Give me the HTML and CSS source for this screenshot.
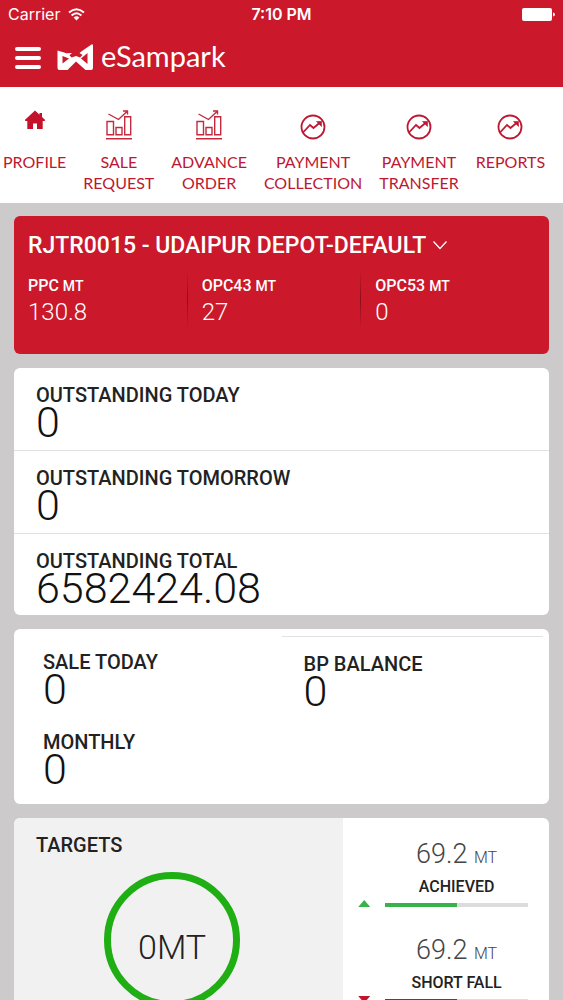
FILE: index.html
```html
<!DOCTYPE html>
<html lang="en">
<head>
  <meta charset="UTF-8" />
  <meta name="viewport" content="width=device-width, initial-scale=1.0"/>
  <title>eSampark</title>
  <link rel="stylesheet" href="styles.css">
</head>
<body>
  <header class="header">
    <div class="status-bar">
      <div class="carrier">
        <span>Carrier</span>
        <svg width="17" height="13" viewBox="0 0 17 13" fill="none" stroke="#fff" stroke-width="2">
          <path d="M1 4.600 Q8.500 -2 16 4.600"/>
          <path d="M3.600 7.400 Q8.500 3 13.400 7.400"/>
          <path d="M8.500 12.500 L5.600 9.500 Q8.500 7.200 11.400 9.500 Z" fill="#fff" stroke="none"/>
        </svg>
      </div>
      <span class="time">7:10 PM</span>
      <svg class="battery" width="33" height="13" viewBox="0 0 33 13" fill="#fff">
        <rect x="0" y="0" width="30" height="13" rx="2"/>
        <path d="M31 4.500 Q33 5 33 6.500 Q33 8 31 8.500 Z"/>
      </svg>
    </div>
    <div class="title-bar">
      <button class="menu-btn" type="button" aria-label="Menu">
        <span></span>
        <span></span>
        <span></span>
      </button>
      <svg class="logo" width="36" height="27" viewBox="0 0 36 27">
        <path fill="#fff" fill-rule="evenodd" d="M0.500 6.500 L9.500 9.300 L15 9 L12.500 11.200 L14.500 13.500 L19 12 L23 13.500 L25.500 11 L22.500 9 L25 7 L34.500 0.500 H36 V24 Q36 26 34 26 H28.500 L19 17.500 L10.500 26 H2.500 Q0.500 26 0.500 24 Z M5.500 12 V19.500 L12 14.500 Z M30.500 9 V20 L24 14.500 Z"/>
      </svg>
      <h1>eSampark</h1>
    </div>
  </header>

  <nav class="nav">
    <a href="#">
      <svg width="26" height="30" viewBox="0 0 26 30" fill="#c4122a">
        <path d="M13 0.500 L17.500 4.700 V3 H20 V7 L23.200 10 L22.500 11 H20.700 V19 H15 V13.500 H11 V19 H5.300 V11 H3.500 L2.800 10 Z"/>
      </svg>
      <span>PROFILE</span>
    </a>
    <a href="#">
      <svg width="26" height="30" viewBox="0 0 26 30" fill="none" stroke="#c4293d" stroke-width="1.400">
        <path d="M0 28.700 H26 M1 11.500 H7.500 V24.700 H1 Z M10 17.500 H16 V24.700 H10 Z M18.700 6.700 H24.700 V24.700 H18.700 Z M2.500 4 L12.500 9.500 L21 1.500 M17 1 H21.500 V4.500"/>
      </svg>
      <span>SALE<br>REQUEST</span>
    </a>
    <a href="#">
      <svg width="26" height="30" viewBox="0 0 26 30" fill="none" stroke="#c4293d" stroke-width="1.400">
        <path d="M0 28.700 H26 M1 11.500 H7.500 V24.700 H1 Z M10 17.500 H16 V24.700 H10 Z M18.700 6.700 H24.700 V24.700 H18.700 Z M2.500 4 L12.500 9.500 L21 1.500 M17 1 H21.500 V4.500"/>
      </svg>
      <span>ADVANCE<br>ORDER</span>
    </a>
    <a href="#">
      <svg width="26" height="30" viewBox="0 0 26 30" fill="none" stroke="#bd1831" stroke-width="1.800">
        <circle cx="13" cy="17" r="11.500"/>
        <path d="M3 22.500 L10 15 L13.500 18 L20 12.500"/>
        <path d="M16.500 11.500 H21.500 V16.500 Z" fill="#bd1831" stroke-width="0.600"/>
      </svg>
      <span>PAYMENT<br>COLLECTION</span>
    </a>
    <a href="#">
      <svg width="26" height="30" viewBox="0 0 26 30" fill="none" stroke="#bd1831" stroke-width="1.800">
        <circle cx="13" cy="17" r="11.500"/>
        <path d="M3 22.500 L10 15 L13.500 18 L20 12.500"/>
        <path d="M16.500 11.500 H21.500 V16.500 Z" fill="#bd1831" stroke-width="0.600"/>
      </svg>
      <span>PAYMENT<br>TRANSFER</span>
    </a>
    <a href="#">
      <svg width="26" height="30" viewBox="0 0 26 30" fill="none" stroke="#bd1831" stroke-width="1.800">
        <circle cx="13" cy="17" r="11.500"/>
        <path d="M3 22.500 L10 15 L13.500 18 L20 12.500"/>
        <path d="M16.500 11.500 H21.500 V16.500 Z" fill="#bd1831" stroke-width="0.600"/>
      </svg>
      <span>REPORTS</span>
    </a>
  </nav>

  <main class="content">
    <section class="card depot">
      <div class="depot-picker">
        <select aria-label="Depot">
          <option>RJTR0015 - UDAIPUR DEPOT-DEFAULT</option>
        </select>
        <svg width="14" height="9" viewBox="0 0 14 9" fill="none" stroke="#fff" stroke-width="1.300">
          <path d="M0.500 0.500 L7 7.500 L13.500 0.500"/>
        </svg>
      </div>
      <div class="stock">
        <div class="stock-item">
          <h3>PPC <small>MT</small></h3>
          <p>130.8</p>
        </div>
        <div class="stock-item">
          <h3>OPC43 <small>MT</small></h3>
          <p>27</p>
        </div>
        <div class="stock-item">
          <h3>OPC53 <small>MT</small></h3>
          <p>0</p>
        </div>
      </div>
    </section>

    <section class="card outstanding">
      <div class="row">
        <h2>OUTSTANDING TODAY</h2>
        <p class="amount">0</p>
      </div>
      <div class="row">
        <h2>OUTSTANDING TOMORROW</h2>
        <p class="amount">0</p>
      </div>
      <div class="row">
        <h2>OUTSTANDING TOTAL</h2>
        <p class="amount">6582424.08</p>
      </div>
    </section>

    <section class="card sales">
      <div class="sales-left">
        <div>
          <h2>SALE TODAY</h2>
          <p class="amount">0</p>
        </div>
        <div>
          <h2>MONTHLY</h2>
          <p class="amount">0</p>
        </div>
      </div>
      <div class="sales-right">
        <h2>BP BALANCE</h2>
        <p class="amount">0</p>
      </div>
    </section>

    <section class="card targets">
      <div class="target-total">
        <h2>TARGETS</h2>
        <div class="ring">0MT</div>
      </div>
      <div class="target-stats">
        <div class="stat">
          <p class="stat-value">69.2 <small>MT</small></p>
          <p class="stat-label">ACHIEVED</p>
          <span class="arrow up"></span>
          <div class="bar"><div class="fill green" style="width: 50%"></div></div>
        </div>
        <div class="stat">
          <p class="stat-value">69.2 <small>MT</small></p>
          <p class="stat-label">SHORT FALL</p>
          <span class="arrow down"></span>
          <div class="bar"><div class="fill red" style="width: 50%"></div></div>
        </div>
      </div>
    </section>
  </main>
</body>
</html>
```
FILE: styles.css
```css
* {
  box-sizing: border-box;
}
body {
  margin: 0;
  height: 100vh;
  display: flex;
  flex-direction: column;
  overflow: hidden;
  font-family: Roboto, 'Liberation Sans', sans-serif;
  color: #222;
  background: #cccacb;
}
h1, h2, h3, p {
  margin: 0;
}
svg {
  display: block;
}
small {
  line-height: 1;
}

/* Header */
.header {
  flex: none;
  background: #cb182a;
  color: #fff;
}
.status-bar {
  display: grid;
  grid-template-columns: 1fr auto 1fr;
  align-items: center;
  height: 28px;
  padding: 0 8px;
  font-family: Inter, sans-serif;
  font-size: 16px;
}
.carrier {
  display: flex;
  align-items: center;
  gap: 8px;
}
.time {
  font-weight: 600;
}
.battery {
  justify-self: end;
}
.title-bar {
  display: flex;
  align-items: center;
  height: 59px;
  padding: 0 15px;
}
.menu-btn {
  display: flex;
  flex-direction: column;
  gap: 5px;
  width: 26px;
  padding: 0;
  border: none;
  background: none;
  cursor: pointer;
}
.menu-btn span {
  height: 4px;
  border-radius: 2px;
  background: #fff;
}
.logo {
  margin: 0 8px 0 16px;
}
.title-bar h1 {
  padding-bottom: 4px;
  font-family: Lato, sans-serif;
  font-size: 29px;
  font-weight: 400;
  line-height: 32px;
}

/* Navigation */
.nav {
  flex: none;
  display: flex;
  gap: 17px;
  padding: 23px 3px 10px;
  background: #fff;
}
.nav a {
  display: flex;
  flex-direction: column;
  align-items: center;
  gap: 11px;
  color: #bd1831;
  font-family: Lato, sans-serif;
  font-size: 16px;
  line-height: 21px;
  text-align: center;
  text-decoration: none;
}

/* Cards */
.content {
  flex: 1;
  min-height: 0;
  padding: 13px 14px;
  overflow-y: auto;
  scrollbar-width: none;
}
.card {
  margin-bottom: 14px;
  border-radius: 6px;
  background: #fff;
  overflow: hidden;
}
h2 {
  font-size: 20px;
  font-weight: 500;
  line-height: 22px;
}
.amount {
  font-size: 43px;
  font-weight: 300;
  line-height: 33px;
  color: #111;
}

/* Depot */
.depot {
  padding: 15px 0 25px 14px;
  background: #cb182a;
  color: #fff;
}
.depot-picker {
  display: flex;
  align-items: center;
  gap: 6px;
}
.depot-picker select {
  appearance: none;
  height: 28px;
  padding: 0;
  border: none;
  background: none;
  color: #fff;
  font-family: inherit;
  font-size: 23px;
  font-weight: 500;
}
.stock {
  display: grid;
  grid-template-columns: repeat(3, 1fr);
  margin-top: 11px;
}
.stock-item {
  margin-right: 14px;
  padding: 4px 0 2px;
}
.stock-item:not(:last-child) {
  background: linear-gradient(#cb182a, #8c0f1c 50%, #cb182a) right / 1px 100% no-repeat;
}
.stock-item h3 {
  font-size: 16px;
  font-weight: 500;
  line-height: 24px;
}
.stock-item small {
  font-size: 14px;
}
.stock-item p {
  font-size: 24px;
  font-weight: 300;
  line-height: 29px;
}

/* Outstanding */
.row {
  padding: 16px 22px 11px;
}
.row + .row {
  border-top: 1px solid #e2e2e2;
}
.row:last-child {
  padding-bottom: 10px;
}

/* Sales */
.sales {
  display: grid;
  grid-template-columns: 1fr 1fr;
}
.sales-left {
  display: grid;
  gap: 25px;
  padding: 22px 0 18px 29px;
}
.sales-right {
  margin: 7px 6px 0 0;
  padding: 16px 22px;
  border-top: 1px solid #e2e2e2;
}

/* Targets */
.targets {
  display: grid;
  grid-template-columns: 8fr 5fr;
}
.target-total {
  padding: 16px 35px 30px 22px;
  background: #f2f1f2;
}
.ring {
  width: 136px;
  height: 136px;
  margin: 16px auto 0;
  padding-top: 14px;
  border: 7px solid #1fae14;
  border-radius: 50%;
  display: flex;
  align-items: center;
  justify-content: center;
  font-size: 34px;
  font-weight: 300;
}
.target-stats {
  padding: 16px 21px 0 15px;
}
.stat {
  display: grid;
  grid-template-columns: 12px 1fr;
  column-gap: 15px;
  margin-bottom: 23px;
}
.stat-value, .stat-label {
  grid-column: 2;
  text-align: center;
}
.stat-value {
  font-size: 27px;
  font-weight: 300;
  line-height: 40px;
  color: #444;
}
.stat-value small {
  font-size: 16px;
}
.stat-label {
  font-size: 16px;
  font-weight: 500;
  line-height: 26px;
}
.arrow {
  height: 7px;
}
.up {
  background: #37b34a;
  clip-path: polygon(50% 0, 100% 100%, 0 100%);
}
.down {
  background: #c4122a;
  clip-path: polygon(0 0, 100% 0, 50% 100%);
}
.bar {
  align-self: end;
  height: 4px;
  background: #dcdcdc;
}
.fill {
  height: 100%;
}
.green {
  background: #37b34a;
}
.red {
  background: #c4122a;
}
```
